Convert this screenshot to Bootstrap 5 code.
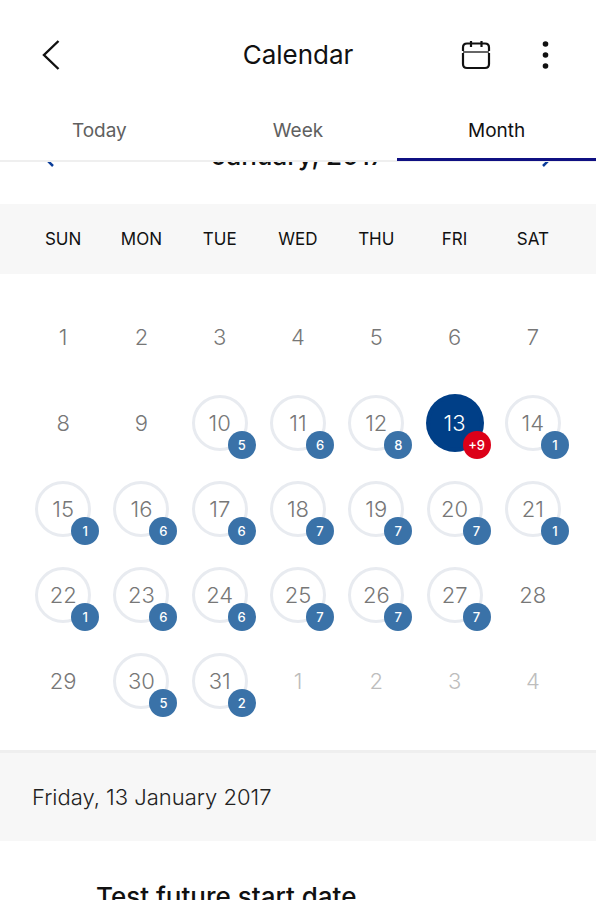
<!DOCTYPE html>
<html lang="en">
<head>
<meta charset="utf-8">
<meta name="viewport" content="width=device-width, initial-scale=1">
<title>Calendar</title>
<link href="https://cdn.jsdelivr.net/npm/bootstrap@5.3.0/dist/css/bootstrap.min.css" rel="stylesheet">
<style>
  body { font-family: Inter, "Liberation Sans", sans-serif; color: #111; background: #fff; }
  svg { display: block; fill: none; stroke: currentColor; }
  .topbar { display: grid; grid-template-columns: 1fr auto 1fr; height: 100px; padding: 10px 32px 0; }
  .topbar h1 { font-size: 26px; line-height: 32px; font-weight: 400; }
  .icon-btn { padding: 0; border: 0; background: none; color: #111; }
  .icon-gap { gap: 36px; }
  .view-tabs { border-bottom: 2px solid #efefef; }
  .view-tabs .nav-link { height: 61px; padding: 0; border-bottom: 3px solid transparent; color: #606060; font-size: 19px; line-height: 62px; margin-bottom: -1px; border-radius: 0; }
  .view-tabs .nav-link.active { color: #111; border-color: #0f1082; }
  .month-bar { height: 42px; padding: 0 32px; overflow: hidden; }
  .month-bar > * { margin-top: -23px; }
  .month-bar h2 { font-size: 26px; line-height: 34px; font-weight: 500; }
  .month-bar .icon-btn { color: #0b3d9a; }
  .month-grid tr { display: grid; grid-template-columns: repeat(7, 1fr); padding: 0 24px; }
  .month-grid thead { display: block; background: #f7f7f7; }
  .month-grid th { font-size: 17px; line-height: 70px; font-weight: 400; padding: 0; }
  .month-grid tbody { display: block; padding: 20px 0 26px; }
  .month-grid td { display: flex; align-items: center; justify-content: center; height: 86px; padding: 0; }
  .day { position: relative; width: 56px; height: 56px; padding: 0; border: 3px solid transparent; border-radius: 50%; background: none; color: #777; font-size: 22px; font-weight: 300; line-height: 50px; }
  .has-events { border-color: #e8ebf0; }
  .chosen { background: #003f87; border-color: #003f87; box-shadow: 0 0 0 1px #003f87; color: #fff; }
  .other-month { color: #bdbdbd; }
  .event-count { position: absolute; right: -11px; bottom: -11px; width: 28px; height: 28px; border-radius: 50%; background: #3a72a8; color: #fff; font-size: 13px; font-weight: 500; line-height: 28px; }
  .chosen .event-count { background: #dc0018; }
  .date-band { background: #f7f7f7; border-top: 3px solid #efefef; padding: 28px 32px; font-size: 22px; line-height: 32px; font-weight: 300; color: #222; }
  .event-item { padding: 39px 32px 32px 96px; font-size: 26px; line-height: 34px; font-weight: 500; }
</style>
<script src="https://cdn.jsdelivr.net/npm/bootstrap@5.3.0/dist/js/bootstrap.bundle.min.js"></script>
</head>
<body class="vh-100 d-flex flex-column overflow-hidden">
<header class="flex-shrink-0">
  <div class="topbar align-items-center">
    <button class="icon-btn me-auto" type="button" aria-label="Back">
      <svg width="36" height="36" viewBox="0 0 36 36" stroke-width="2.4"><path d="M26.500 4 12 18l14.500 14"/></svg>
    </button>
    <h1 class="m-0">Calendar</h1>
    <div class="d-flex align-items-center ms-auto icon-gap">
      <button class="icon-btn" type="button" aria-label="Pick a date">
        <svg width="32" height="32" viewBox="0 0 32 32" stroke-width="2.2"><path d="M3 12V8.500q0-4 4-4h18q4 0 4 4V12M3 14v11q0 4 4 4h18q4 0 4-4V14M11 2v6M21.500 2v6"/><path d="M3 13h26" stroke="#555" stroke-width="1.800"/></svg>
      </button>
      <button class="icon-btn" type="button" aria-label="More options">
        <svg width="36" height="36" viewBox="0 0 36 36"><g fill="#111" stroke="none"><circle cx="17.500" cy="7" r="2.800"/><circle cx="17.500" cy="18" r="2.800"/><circle cx="17.500" cy="29" r="2.800"/></g></svg>
      </button>
    </div>
  </div>
  <nav class="view-tabs nav nav-fill" aria-label="Calendar view">
    <a class="nav-link w-25" href="#today">Today</a>
    <a class="nav-link w-25" href="#week">Week</a>
    <a class="nav-link w-25 active" href="#month" aria-current="page">Month</a>
  </nav>
</header>
<main class="flex-fill overflow-hidden" id="month">
  <div class="month-bar d-flex justify-content-between align-items-start">
    <button class="icon-btn" type="button" aria-label="Previous month">
      <svg width="32" height="32" viewBox="0 0 32 32" stroke-width="2.500"><path d="M21 5 10 16l11 11"/></svg>
    </button>
    <h2 class="mb-0">January, 2017</h2>
    <button class="icon-btn" type="button" aria-label="Next month">
      <svg width="32" height="32" viewBox="0 0 32 32" stroke-width="2.500"><path d="M11 5l11 11-11 11"/></svg>
    </button>
  </div>
  <table class="month-grid d-block w-100 text-center">
    <thead><tr><th scope="col">SUN</th><th scope="col">MON</th><th scope="col">TUE</th><th scope="col">WED</th><th scope="col">THU</th><th scope="col">FRI</th><th scope="col">SAT</th></tr></thead>
    <tbody>
      <tr>
        <td><button type="button" class="day">1</button></td>
        <td><button type="button" class="day">2</button></td>
        <td><button type="button" class="day">3</button></td>
        <td><button type="button" class="day">4</button></td>
        <td><button type="button" class="day">5</button></td>
        <td><button type="button" class="day">6</button></td>
        <td><button type="button" class="day">7</button></td>
      </tr>
      <tr>
        <td><button type="button" class="day">8</button></td>
        <td><button type="button" class="day">9</button></td>
        <td><button type="button" class="day has-events">10<span class="event-count">5</span></button></td>
        <td><button type="button" class="day has-events">11<span class="event-count">6</span></button></td>
        <td><button type="button" class="day has-events">12<span class="event-count">8</span></button></td>
        <td><button type="button" class="day chosen" aria-pressed="true">13<span class="event-count">+9</span></button></td>
        <td><button type="button" class="day has-events">14<span class="event-count">1</span></button></td>
      </tr>
      <tr>
        <td><button type="button" class="day has-events">15<span class="event-count">1</span></button></td>
        <td><button type="button" class="day has-events">16<span class="event-count">6</span></button></td>
        <td><button type="button" class="day has-events">17<span class="event-count">6</span></button></td>
        <td><button type="button" class="day has-events">18<span class="event-count">7</span></button></td>
        <td><button type="button" class="day has-events">19<span class="event-count">7</span></button></td>
        <td><button type="button" class="day has-events">20<span class="event-count">7</span></button></td>
        <td><button type="button" class="day has-events">21<span class="event-count">1</span></button></td>
      </tr>
      <tr>
        <td><button type="button" class="day has-events">22<span class="event-count">1</span></button></td>
        <td><button type="button" class="day has-events">23<span class="event-count">6</span></button></td>
        <td><button type="button" class="day has-events">24<span class="event-count">6</span></button></td>
        <td><button type="button" class="day has-events">25<span class="event-count">7</span></button></td>
        <td><button type="button" class="day has-events">26<span class="event-count">7</span></button></td>
        <td><button type="button" class="day has-events">27<span class="event-count">7</span></button></td>
        <td><button type="button" class="day">28</button></td>
      </tr>
      <tr>
        <td><button type="button" class="day">29</button></td>
        <td><button type="button" class="day has-events">30<span class="event-count">5</span></button></td>
        <td><button type="button" class="day has-events">31<span class="event-count">2</span></button></td>
        <td><button type="button" class="day other-month">1</button></td>
        <td><button type="button" class="day other-month">2</button></td>
        <td><button type="button" class="day other-month">3</button></td>
        <td><button type="button" class="day other-month">4</button></td>
      </tr>
    </tbody>
  </table>
  <h2 class="date-band m-0">Friday, 13 January 2017</h2>
  <h3 class="event-item m-0">Test future start date</h3>
</main>
</body>
</html>
